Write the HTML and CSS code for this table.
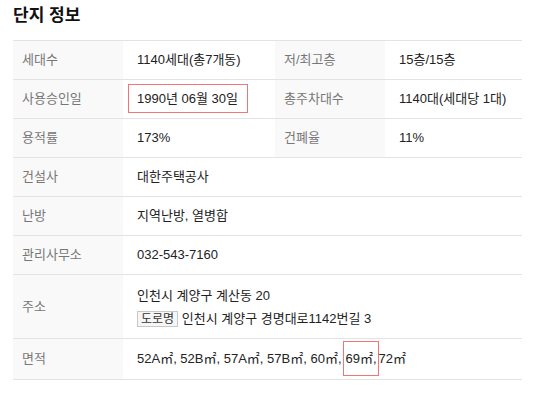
FILE: index.html
```html
<!DOCTYPE html>
<html lang="ko">
<head>
  <meta charset="UTF-8" />
  <meta name="viewport" content="width=device-width, initial-scale=1" />
  <title>단지 정보</title>
  <link rel="stylesheet" href="styles.css">
</head>
<body>
  <div class="danji">
    <h3 class="danji-titulo">단지 정보</h3>

    <table class="danji-tabla">
      <colgroup>
        <col class="col-th">
        <col class="col-td">
        <col class="col-th">
        <col>
      </colgroup>
      <tr>
        <th>세대수</th>
        <td>1140세대(총7개동)</td>
        <th>저/최고층</th>
        <td>15층/15층</td>
      </tr>
      <tr>
        <th>사용승인일</th>
        <td><span class="marca marca-fecha">1990년 06월 30일</span></td>
        <th>총주차대수</th>
        <td>1140대(세대당 1대)</td>
      </tr>
      <tr>
        <th>용적률</th>
        <td>173%</td>
        <th>건폐율</th>
        <td>11%</td>
      </tr>
      <tr>
        <th>건설사</th>
        <td colspan="3">대한주택공사</td>
      </tr>
      <tr>
        <th>난방</th>
        <td colspan="3">지역난방, 열병합</td>
      </tr>
      <tr>
        <th>관리사무소</th>
        <td colspan="3">032-543-7160</td>
      </tr>
      <tr class="fila-direccion">
        <th>주소</th>
        <td colspan="3">
          <div>인천시 계양구 계산동 20</div>
          <div><span class="etiqueta">도로명</span> 인천시 계양구 경명대로1142번길 3</div>
        </td>
      </tr>
      <tr class="fila-area">
        <th>면적</th>
        <td colspan="3">52A㎡, 52B㎡, 57A㎡, 57B㎡, 60㎡,<span class="marca marca-area">69㎡,</span>72㎡</td>
      </tr>
    </table>
  </div>
</body>
</html>
```

FILE: styles.css
```css
body {
  margin: 0;
  padding: 0 11px 0 13px;
  font-family: "Liberation Sans", "Noto Sans CJK KR", sans-serif;
  font-size: 13px;
  color: #222;
  background: #fff;
}

.danji-titulo {
  margin: 0;
  padding-top: 5px;
  height: 35px;
  font-size: 17px;
  line-height: 22px;
  font-weight: bold;
  color: #111;
}

.danji-tabla {
  width: 100%;
  table-layout: fixed;
  border-collapse: collapse;
  border-top: 1px solid #e3e3e3;
}

.col-th {
  width: 110px;
}

.col-td {
  width: 152px;
}

.danji-tabla th,
.danji-tabla td {
  height: 18px;
  padding: 10px 0;
  line-height: 18px;
  border-bottom: 1px solid #e3e3e3;
  text-align: left;
  vertical-align: middle;
}

.danji-tabla th {
  padding-left: 9px;
  background: #f9f9f9;
  color: #777;
  font-weight: normal;
}

.danji-tabla td {
  padding-left: 14px;
}

.fila-direccion td {
  padding-top: 9px;
  padding-bottom: 8px;
  line-height: 23px;
}

.fila-area td {
  padding-top: 11px;
  padding-bottom: 11px;
}

.etiqueta {
  display: inline-block;
  padding: 0 3px;
  line-height: 14px;
  font-size: 12px;
  color: #333;
  background: #f6f6f6;
  border: 1px solid #c8c8c8;
}

.marca {
  display: inline-block;
  border: 1px solid #f27676;
  line-height: 15px;
}

.marca-fecha {
  margin: -6px 0 -6px -9px;
  padding: 6px 9px 6px 8px;
}

.marca-area {
  margin: -9px 0 -9px 1px;
  padding: 9px 1px 9px 2px;
}
```
